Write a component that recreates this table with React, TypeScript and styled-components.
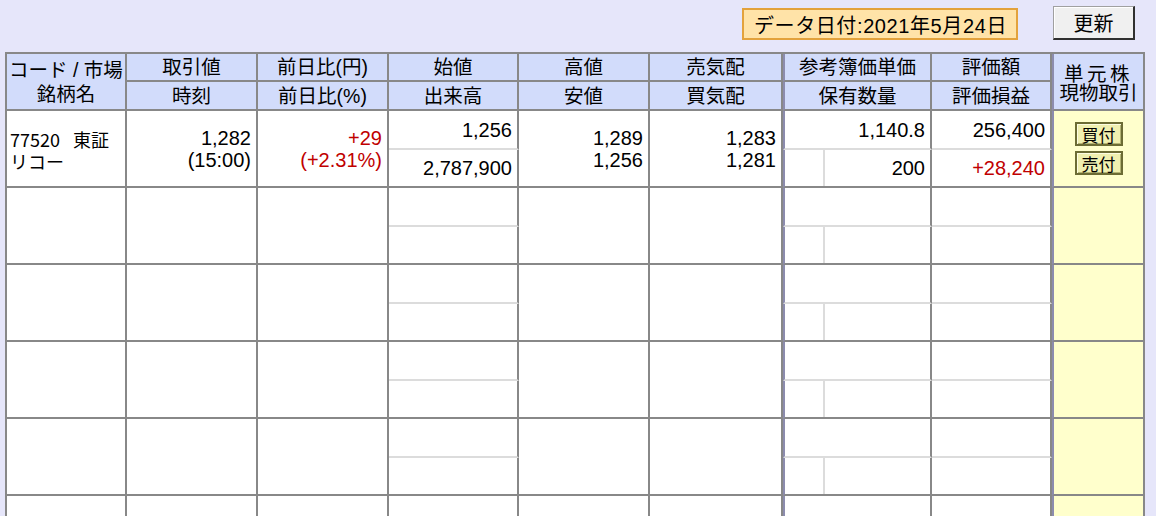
import React from 'react';
import styled, { createGlobalStyle, css } from 'styled-components';

const GlobalStyle = createGlobalStyle`
  *, *::before, *::after { box-sizing: border-box; }
  html, body {
    margin: 0;
    padding: 0;
    background: #e6e6fa;
    overflow: hidden;
  }
  body {
    font-family: "Liberation Sans", "Noto Sans CJK JP", sans-serif;
    color: #000;
  }
`;

const LINE = '#888888';
const LIGHT_LINE = '#dcdcdc';
const DOUBLE_LINE = '#8c8cae';
const COLS = '120px 131px 131px 130px 131px 133px 149px 120px 93px';

const Page = styled.div`
  width: 1156px;
`;

const Toolbar = styled.div`
  display: flex;
  justify-content: flex-end;
  align-items: flex-end;
  gap: 35px;
  height: 52px;
  padding: 6px 21px 12px 0;
`;

const DateBadge = styled.div`
  display: flex;
  align-items: center;
  height: 32px;
  padding: 0 9px 0 10px;
  background: #ffe3a8;
  border: 2px solid #e3a23c;
  font-size: 20px;
  letter-spacing: 0.6px;
  white-space: nowrap;
`;

const RefreshButton = styled.button`
  width: 82px;
  height: 34px;
  padding: 0;
  margin: 0;
  background: #f0f0f0;
  border-style: solid;
  border-width: 1px 2px 2px 1px;
  border-color: #a0a0a0 #303030 #303030 #a0a0a0;
  box-shadow: inset 1px 1px 0 #ffffff;
  font-family: "Noto Sans CJK JP", sans-serif;
  font-size: 20px;
  line-height: 1;
  color: #000;
`;

const Sheet = styled.div`
  margin-left: 5px;
  width: 1140px;
  border-left: 2px solid ${LINE};
  border-top: 2px solid ${LINE};
`;

const HeaderRow = styled.div`
  display: grid;
  grid-template-columns: ${COLS};
  grid-template-rows: 28px 29px;
`;

const BodyRow = styled.div`
  display: grid;
  grid-template-columns: ${COLS};
  grid-template-rows: 39px 38px;
`;

type CellProps = { $span?: boolean; $double?: boolean };

const cellFrame = css<CellProps>`
  border-right: 2px solid ${LINE};
  border-bottom: 2px solid ${LINE};
  min-width: 0;
  ${(p) => p.$span && 'grid-row: span 2;'}
  ${(p) => p.$double && `border-left: 2px solid ${DOUBLE_LINE};`}
`;

const HeadCell = styled.div<CellProps & { $lh?: number; $pt?: number }>`
  ${cellFrame}
  display: flex;
  flex-direction: column;
  align-items: center;
  justify-content: center;
  padding-top: ${(p) => p.$pt ?? 0}px;
  background: #d2dcfb;
  font-family: "Liberation Sans", "Noto Sans CJK JP", sans-serif;
  font-size: 19.5px;
  line-height: ${(p) => p.$lh ?? 24}px;
  white-space: nowrap;
  text-align: center;
`;

const HeadLine = styled.span<{ $spread?: number }>`
  display: block;
  letter-spacing: ${(p) => p.$spread ?? 0}px;
`;

const DataCell = styled.div<CellProps & { $split?: boolean; $gain?: boolean; $trade?: boolean }>`
  ${cellFrame}
  ${(p) => p.$split && `border-bottom-color: ${LIGHT_LINE};`}
  display: flex;
  flex-direction: column;
  justify-content: center;
  align-items: flex-end;
  padding: 0 5px;
  background: ${(p) => (p.$trade ? '#ffffcc' : '#ffffff')};
  color: ${(p) => (p.$gain ? '#c00000' : '#000')};
  font-size: 20px;
  line-height: 22px;
  white-space: nowrap;
`;

const NameCell = styled(DataCell)`
  align-items: flex-start;
  padding: 2px 0 0 3px;
  font-family: "Noto Sans CJK JP", sans-serif;
  font-size: 18px;
  line-height: 22px;
`;

const CodeLine = styled.div`
  display: flex;
  gap: 13px;
`;

const HoldingCell = styled(DataCell)`
  flex-direction: row;
  align-items: stretch;
  padding: 0;
`;

const HoldingGap = styled.div`
  width: 40px;
  flex: none;
  border-right: 2px solid ${LIGHT_LINE};
`;

const HoldingValue = styled.div`
  flex: 1;
  display: flex;
  align-items: center;
  justify-content: flex-end;
  padding-right: 5px;
`;

const TradeCell = styled(DataCell)`
  align-items: center;
  justify-content: flex-start;
  gap: 5px;
  padding: 11px 0 0;
`;

const TradeButton = styled.button`
  width: 48px;
  height: 24px;
  padding: 0;
  margin: 0;
  background: #f0f0b0;
  border: 2px solid #6c6c34;
  box-shadow: inset 1px 1px 0 #fdfde0, inset -1px -1px 0 #b4b474;
  font-family: "Noto Sans CJK JP", sans-serif;
  font-size: 17px;
  line-height: 1;
  color: #000;
`;

type Holding = {
  code: string;
  market: string;
  name: string;
  price: string;
  time: string;
  change: string;
  changePct: string;
  open: string;
  volume: string;
  high: string;
  low: string;
  ask: string;
  bid: string;
  bookPrice: string;
  quantity: string;
  value: string;
  profit: string;
};

const holdings: Holding[] = [
  {
    code: '77520',
    market: '東証',
    name: 'リコー',
    price: '1,282',
    time: '(15:00)',
    change: '+29',
    changePct: '(+2.31%)',
    open: '1,256',
    volume: '2,787,900',
    high: '1,289',
    low: '1,256',
    ask: '1,283',
    bid: '1,281',
    bookPrice: '1,140.8',
    quantity: '200',
    value: '256,400',
    profit: '+28,240',
  },
];

const EMPTY_ROWS = 5;

function Header() {
  return (
    <HeaderRow>
      <HeadCell $span>
        <HeadLine>コード / 市場</HeadLine>
        <HeadLine>銘柄名</HeadLine>
      </HeadCell>
      <HeadCell>取引値</HeadCell>
      <HeadCell>前日比(円)</HeadCell>
      <HeadCell>始値</HeadCell>
      <HeadCell>高値</HeadCell>
      <HeadCell>売気配</HeadCell>
      <HeadCell $double>参考簿価単価</HeadCell>
      <HeadCell>評価額</HeadCell>
      <HeadCell $span $double $lh={19} $pt={4}>
        <HeadLine $spread={3.5}>単元株</HeadLine>
        <HeadLine>現物取引</HeadLine>
      </HeadCell>
      <HeadCell>時刻</HeadCell>
      <HeadCell>前日比(%)</HeadCell>
      <HeadCell>出来高</HeadCell>
      <HeadCell>安値</HeadCell>
      <HeadCell>買気配</HeadCell>
      <HeadCell $double>保有数量</HeadCell>
      <HeadCell>評価損益</HeadCell>
    </HeaderRow>
  );
}

function HoldingRow({ h }: { h?: Holding }) {
  return (
    <BodyRow>
      <NameCell $span>
        {h && (
          <>
            <CodeLine>
              <span>{h.code}</span>
              <span>{h.market}</span>
            </CodeLine>
            <div>{h.name}</div>
          </>
        )}
      </NameCell>
      <DataCell $span>
        {h && (
          <>
            <div>{h.price}</div>
            <div>{h.time}</div>
          </>
        )}
      </DataCell>
      <DataCell $span $gain>
        {h && (
          <>
            <div>{h.change}</div>
            <div>{h.changePct}</div>
          </>
        )}
      </DataCell>
      <DataCell $split>{h?.open}</DataCell>
      <DataCell $span>
        {h && (
          <>
            <div>{h.high}</div>
            <div>{h.low}</div>
          </>
        )}
      </DataCell>
      <DataCell $span>
        {h && (
          <>
            <div>{h.ask}</div>
            <div>{h.bid}</div>
          </>
        )}
      </DataCell>
      <DataCell $split $double>{h?.bookPrice}</DataCell>
      <DataCell $split>{h?.value}</DataCell>
      <TradeCell $span $double $trade>
        {h && (
          <>
            <TradeButton type="button">買付</TradeButton>
            <TradeButton type="button">売付</TradeButton>
          </>
        )}
      </TradeCell>
      <DataCell>{h?.volume}</DataCell>
      <HoldingCell $double>
        <HoldingGap />
        <HoldingValue>{h?.quantity}</HoldingValue>
      </HoldingCell>
      <DataCell $gain>{h?.profit}</DataCell>
    </BodyRow>
  );
}

export default function App() {
  return (
    <Page>
      <GlobalStyle />
      <Toolbar>
        <DateBadge>データ日付:2021年5月24日</DateBadge>
        <RefreshButton type="button">更新</RefreshButton>
      </Toolbar>
      <Sheet>
        <Header />
        {holdings.map((h) => (
          <HoldingRow key={h.code} h={h} />
        ))}
        {Array.from({ length: EMPTY_ROWS }, (_, i) => (
          <HoldingRow key={`empty-${i}`} />
        ))}
      </Sheet>
    </Page>
  );
}
